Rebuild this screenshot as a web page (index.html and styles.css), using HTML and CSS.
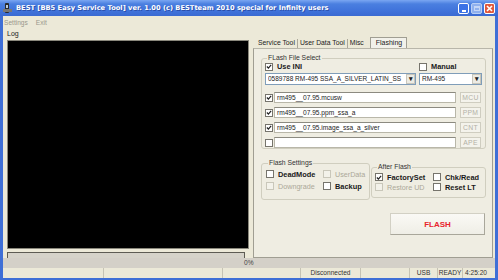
FILE: index.html
```html
<!DOCTYPE html>
<html lang="en">
<head>
  <meta charset="UTF-8">
  <title>BEST BB5 Easy Service Tool</title>
  <link rel="stylesheet" href="styles.css">
</head>
<body>
  <div class="window">
    <div class="titlebar">
      <span class="appicon">
        <svg width="9" height="10" viewBox="0 0 9 10"><rect x="2" y="0" width="4" height="10" rx="1" fill="#2a2a2a"/><rect x="3" y="2" width="2" height="3" fill="#bcd"/><rect x="0" y="6" width="9" height="3" fill="#777"/></svg>
      </span>
      <span class="title">BEST [BB5 Easy Service Tool] ver. 1.00 (c) BESTteam 2010 special for Infinity users</span>
      <span class="winbtns">
        <span class="wb min"><i></i></span>
        <span class="wb max"><i></i></span>
        <span class="wb close">
          <svg width="7" height="7" viewBox="0 0 7 7"><path d="M1 1L6 6M6 1L1 6" stroke="#fff" stroke-width="1.6"/></svg>
        </span>
      </span>
    </div>

    <div class="menubar"><span>Settings</span><span>Exit</span></div>

    <div class="main">
      <div class="logcol">
        <div class="loglabel">Log</div>
        <div class="logbox"></div>
        <div class="progress"></div>
      </div>

      <div class="tabcol">
        <div class="tabs">
          <span class="tab">Service Tool</span>
          <span class="tab">User Data Tool</span>
          <span class="tab">Misc</span>
          <span class="tab active">Flashing</span>
        </div>
        <div class="panel">
          <fieldset class="grp filesel">
            <legend>FLash File Select</legend>
            <div class="inirow">
              <label class="chk bold ini"><span class="cb on"><svg viewBox="0 0 7 7"><path d="M1 3.5L2.8 5.3L6 1.5" fill="none" stroke="#222" stroke-width="1.4"/></svg></span>Use INI</label>
              <label class="chk bold"><span class="cb"></span>Manual</label>
            </div>
            <div class="comborow">
              <div class="combo wide"><span>0589788 RM-495 SSA_A_SILVER_LATIN_SS</span><b>▾</b></div>
              <div class="combo narrow"><span>RM-495</span><b>▾</b></div>
            </div>
            <div class="filerow">
              <span class="cb on"><svg viewBox="0 0 7 7"><path d="M1 3.5L2.8 5.3L6 1.5" fill="none" stroke="#222" stroke-width="1.4"/></svg></span>
              <div class="field">rm495__07.95.mcusw</div>
              <span class="smallbtn">MCU</span>
            </div>
            <div class="filerow">
              <span class="cb on"><svg viewBox="0 0 7 7"><path d="M1 3.5L2.8 5.3L6 1.5" fill="none" stroke="#222" stroke-width="1.4"/></svg></span>
              <div class="field">rm495__07.95.ppm_ssa_a</div>
              <span class="smallbtn">PPM</span>
            </div>
            <div class="filerow">
              <span class="cb on"><svg viewBox="0 0 7 7"><path d="M1 3.5L2.8 5.3L6 1.5" fill="none" stroke="#222" stroke-width="1.4"/></svg></span>
              <div class="field">rm495__07.95.image_ssa_a_silver</div>
              <span class="smallbtn">CNT</span>
            </div>
            <div class="filerow">
              <span class="cb"></span>
              <div class="field"></div>
              <span class="smallbtn">APE</span>
            </div>
          </fieldset>

          <div class="settingsrow">
            <fieldset class="grp flashset">
              <legend>Flash Settings</legend>
              <div class="optgrid">
                <label class="chk bold"><span class="cb"></span>DeadMode</label>
                <label class="chk off"><span class="cb"></span>UserData</label>
                <label class="chk off"><span class="cb"></span>Downgrade</label>
                <label class="chk bold"><span class="cb"></span>Backup</label>
              </div>
            </fieldset>
            <fieldset class="grp afterflash">
              <legend>After Flash</legend>
              <div class="optgrid">
                <label class="chk bold"><span class="cb on"><svg viewBox="0 0 7 7"><path d="M1 3.5L2.8 5.3L6 1.5" fill="none" stroke="#222" stroke-width="1.4"/></svg></span>FactorySet</label>
                <label class="chk bold"><span class="cb"></span>Chk/Read</label>
                <label class="chk off"><span class="cb"></span>Restore UD</label>
                <label class="chk bold"><span class="cb"></span>Reset LT</label>
              </div>
            </fieldset>
          </div>

          <div class="flashrow">
            <button class="flashbtn">FLASH</button>
          </div>
        </div>
      </div>
    </div>

    <div class="strip"><span>0%</span></div>

    <div class="statusbar">
      <span class="sp" style="width: 101px"></span>
      <span class="sp" style="width: 119px"></span>
      <span class="sp" style="width: 78px"></span>
      <span class="sp" style="width: 60px">Disconnected</span>
      <span class="sp" style="width: 49px"></span>
      <span class="sp" style="width: 28px">USB</span>
      <span class="sp" style="width: 25px">READY</span>
      <span class="sp last">4:25:20</span>
    </div>
  </div>
</body>
</html>
```

FILE: styles.css
```css
* { box-sizing: border-box; }
body {
  margin: 0;
  width: 498px;
  height: 280px;
  overflow: hidden;
  font-family: "Liberation Sans", Arial, sans-serif;
  font-size: 7px;
  color: #222;
  background: #3a6ad4;
}
.window {
  width: 498px;
  height: 280px;
  display: flex;
  flex-direction: column;
  background: #ece9d8;
  border: 3px solid #3f6fd6;
  border-top: none;
  border-bottom-width: 2px;
}

/* title bar */
.titlebar {
  height: 16px;
  margin: 0 -3px;
  padding: 0 3px;
  display: flex;
  align-items: center;
  background: linear-gradient(to bottom, #7aa6f2 0%, #4a7fe0 25%, #3f72da 70%, #3a6ad2 100%);
  color: #fff;
}
.appicon { width: 10px; height: 11px; display: flex; align-items: center; }
.title {
  margin-left: 3px;
  font-family: "DejaVu Sans", sans-serif;
  font-weight: bold;
  font-size: 6.7px;
  text-shadow: 1px 1px 0 rgba(20,40,120,0.5);
  white-space: nowrap;
  flex: 1;
}
.winbtns { display: flex; gap: 2px; padding-top: 1px; }
.wb {
  width: 11px;
  height: 11px;
  border: 1px solid #fff;
  border-radius: 2px;
  display: flex;
  align-items: center;
  justify-content: center;
}
.wb.min { background: #3b72e6; }
.wb.min i { width: 4px; height: 2px; background: #fff; margin-top: 5px; }
.wb.max { background: #8fb0ee; border-color: #b9cff5; }
.wb.max i { width: 6px; height: 5px; border: 1px solid #c5d6f6; border-top-width: 2px; }
.wb.close { background: #e0583c; }
.wb.close svg { display: block; }

/* menu */
.menubar {
  height: 12px;
  display: flex;
  align-items: center;
  gap: 8px;
  padding-left: 1px;
  color: #9a988c;
  font-size: 6.6px;
}

/* main area */
.main {
  height: 230px;
  display: flex;
}
.logcol {
  width: 247px;
  display: flex;
  flex-direction: column;
  padding-left: 4px;
}
.loglabel {
  height: 12px;
  padding: 2px 0 0 0;
  font-size: 7px;
}
.logbox {
  height: 209px;
  width: 242px;
  background: #000;
  border: 1px solid #8a887c;
}
.progress {
  margin-top: 3px;
  width: 238px;
  height: 6px;
  background: #d6d3ca;
  border: 1px solid #5e5c54;
  border-bottom: none;
}
.tabcol {
  flex: 1;
  padding-left: 3px;
  padding-right: 2px;
  display: flex;
  flex-direction: column;
}
.tabs {
  margin-top: 9px;
  height: 11px;
  display: flex;
  align-items: flex-end;
  padding-left: 3px;
  font-size: 6.8px;
}
.tab {
  height: 9px;
  line-height: 8px;
  padding: 0 2px;
  border-right: 1px solid #aca899;
}
.tab:nth-child(3) { border-right: none; padding-right: 6px; }
.tab.active {
  height: 11px;
  line-height: 9px;
  padding: 0 4px 0 5px;
  border: 1px solid #a09e92;
  border-bottom: none;
  background: #f2f1ea;
  font-size: 7px;
}
.panel {
  height: 210px;
  border: 1px solid #a09e92;
  border-top-color: #b8b6aa;
  background: #efede2;
  padding: 0 6px 0 7px;
  display: flex;
  flex-direction: column;
}

/* group boxes */
.grp {
  margin: 0;
  border: 1px solid #d0cebf;
  border-radius: 3px;
  padding: 0 3px;
}
.grp legend {
  padding: 0 1px;
  margin-left: 2px;
  font-size: 6.8px;
  line-height: 8px;
  color: #333;
}
.filesel {
  margin-top: 5px;
  height: 95px;
}
.inirow {
  height: 9px;
  display: flex;
  align-items: center;
}
.chk {
  display: flex;
  align-items: center;
  gap: 2px;
  white-space: nowrap;
}
.chk.bold { font-weight: bold; font-size: 7.4px; color: #1a1a1a; }
.chk.off { color: #aca899; font-size: 7.2px; }
.chk.ini { width: 154px; }
.cb {
  width: 8px;
  height: 8px;
  flex: none;
  background: #fff;
  border: 1px solid #76746c;
  display: inline-flex;
  align-items: center;
  justify-content: center;
  margin-right: 2px;
}
.cb svg { width: 7px; height: 7px; display: block; }
.chk.off .cb { border-color: #c9c7ba; background: #f3f2ea; }

.comborow {
  margin-top: 2px;
  height: 12px;
  display: flex;
  gap: 3px;
}
.combo {
  height: 12px;
  background: #fff;
  border: 1px solid #7f9db9;
  display: flex;
  align-items: center;
  padding-left: 2px;
  font-size: 6.5px;
  white-space: nowrap;
  overflow: hidden;
}
.combo span { flex: 1; overflow: hidden; line-height: 10px; height: 10px; }
.combo b {
  width: 9px;
  height: 10px;
  background: #ecebe4;
  border: 1px solid #c8c6bb;
  font-size: 7px;
  line-height: 8px;
  text-align: center;
  color: #222;
}
.combo.wide { width: 151px; }
.combo.narrow { width: 63px; }

.filerow {
  height: 11px;
  margin-top: 4px;
  display: flex;
  align-items: center;
}
.filerow:nth-of-type(3) { margin-top: 7px; }
.filerow .cb { margin-right: 1px; }
.field {
  width: 182px;
  height: 11px;
  background: #fff;
  border: 1px solid #b9b7a9;
  border-top-color: #8c8a80;
  padding-left: 2px;
  line-height: 9px;
  font-size: 6.6px;
  white-space: nowrap;
}
.smallbtn {
  margin-left: 4px;
  width: 21px;
  height: 11px;
  border: 1px solid #cfcdc0;
  background: #f4f3ec;
  color: #b3b1a6;
  text-align: center;
  line-height: 9px;
  font-size: 6.8px;
  letter-spacing: 0.3px;
}

.settingsrow {
  margin-top: 10px;
  display: flex;
  align-items: flex-start;
  gap: 1px;
}
.flashset { width: 109px; height: 41px; padding-left: 4px; }
.afterflash { width: 115px; height: 35px; margin-top: 4px; }
.optgrid {
  margin-top: 2px;
  display: grid;
  grid-template-columns: 57px auto;
  row-gap: 2px;
}
.afterflash .optgrid { grid-template-columns: 58px auto; row-gap: 0; margin-top: 1px; }
.optgrid .chk { height: 10px; }

.flashrow {
  margin-top: 13px;
  display: flex;
  justify-content: flex-end;
  padding-right: 1px;
}
.flashbtn {
  width: 95px;
  height: 22px;
  background: linear-gradient(#faf9f5, #efeee6);
  border: 1px solid #d2d0c4;
  border-right-color: #a9a79b;
  border-bottom-color: #a9a79b;
  color: #e8252d;
  font-family: "Liberation Sans", Arial, sans-serif;
  font-weight: bold;
  font-size: 8px;
  padding: 0;
}

/* bottom */
.strip {
  height: 10px;
  background: #d4d0c8;
  padding-left: 241px;
  line-height: 10px;
  font-size: 6.6px;
  color: #444;
}
.statusbar {
  height: 10px;
  display: flex;
  background: #ece9d8;
  font-size: 6.6px;
  line-height: 10px;
  color: #333;
}
.sp {
  border-right: 1px solid #c6c3b4;
  text-align: center;
  white-space: nowrap;
  overflow: hidden;
}
.sp.last { flex: 1; border-right: none; text-align: left; padding-left: 2px; }
```
